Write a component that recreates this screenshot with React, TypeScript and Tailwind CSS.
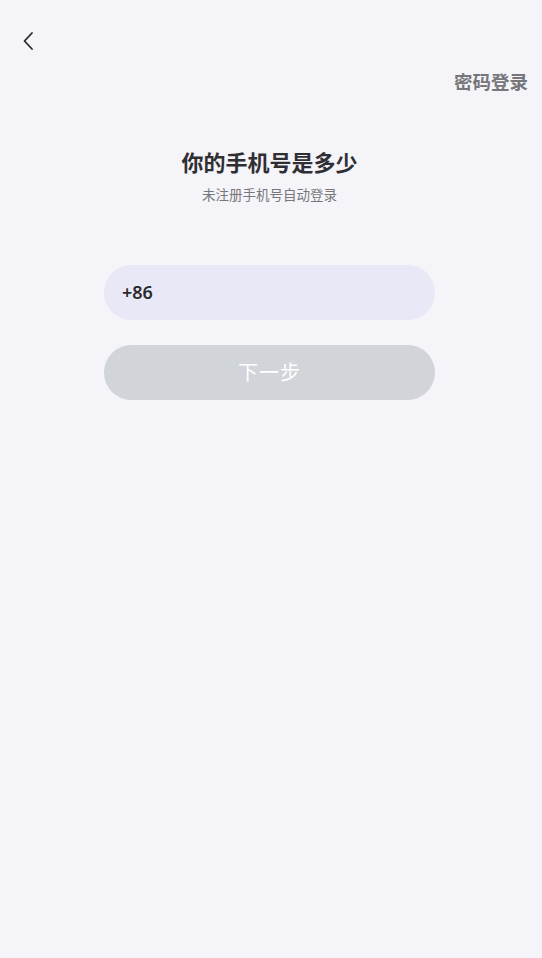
import React from 'react';

const FONT = { fontFamily: '"Noto Sans", "Noto Sans CJK SC", sans-serif' };

export default function App() {
  return (
    <div className="min-h-[958px] w-full bg-[#f4f4f9]" style={FONT}>
      {/* Top bar */}
      <div className="h-[82px] flex items-start px-[20px] pt-[30px]">
        <button className="w-[16px] h-[22px] flex items-center justify-center" aria-label="back">
          <svg width="12" height="20" viewBox="0 0 12 20" fill="none">
            <path d="M10 2 L2.5 10 L10 18" stroke="#2a2a2e" strokeWidth="1.8" strokeLinecap="round" strokeLinejoin="round" />
          </svg>
        </button>
      </div>

      <div className="flex justify-end pr-[14px] -mt-[13px]">
        <span className="text-[18.5px] leading-[26px] font-semibold text-[#77777b]">密码登录</span>
      </div>

      <div className="ml-[104px] w-[331px]">
        {/* Heading */}
        <div className="mt-[52px] flex flex-col items-center">
          <h1 className="text-[22px] leading-[30px] font-bold text-[#2f2f33]">你的手机号是多少</h1>
          <p className="mt-[8px] text-[13.5px] leading-[20px] text-[#77777b]">未注册手机号自动登录</p>
        </div>

        {/* Form */}
        <div className="mt-[60px] flex flex-col gap-[25px]">
          <div className="h-[55px] rounded-full bg-[#e8e8f6] flex items-center px-[18px]">
            <span className="text-[18px] font-semibold text-[#2a2a2e]">+86</span>
          </div>
          <button className="h-[55px] rounded-full bg-[#d1d4d8] flex items-center justify-center">
            <span className="text-[20px] text-white tracking-[1px]">下一步</span>
          </button>
        </div>
      </div>
    </div>
  );
}
